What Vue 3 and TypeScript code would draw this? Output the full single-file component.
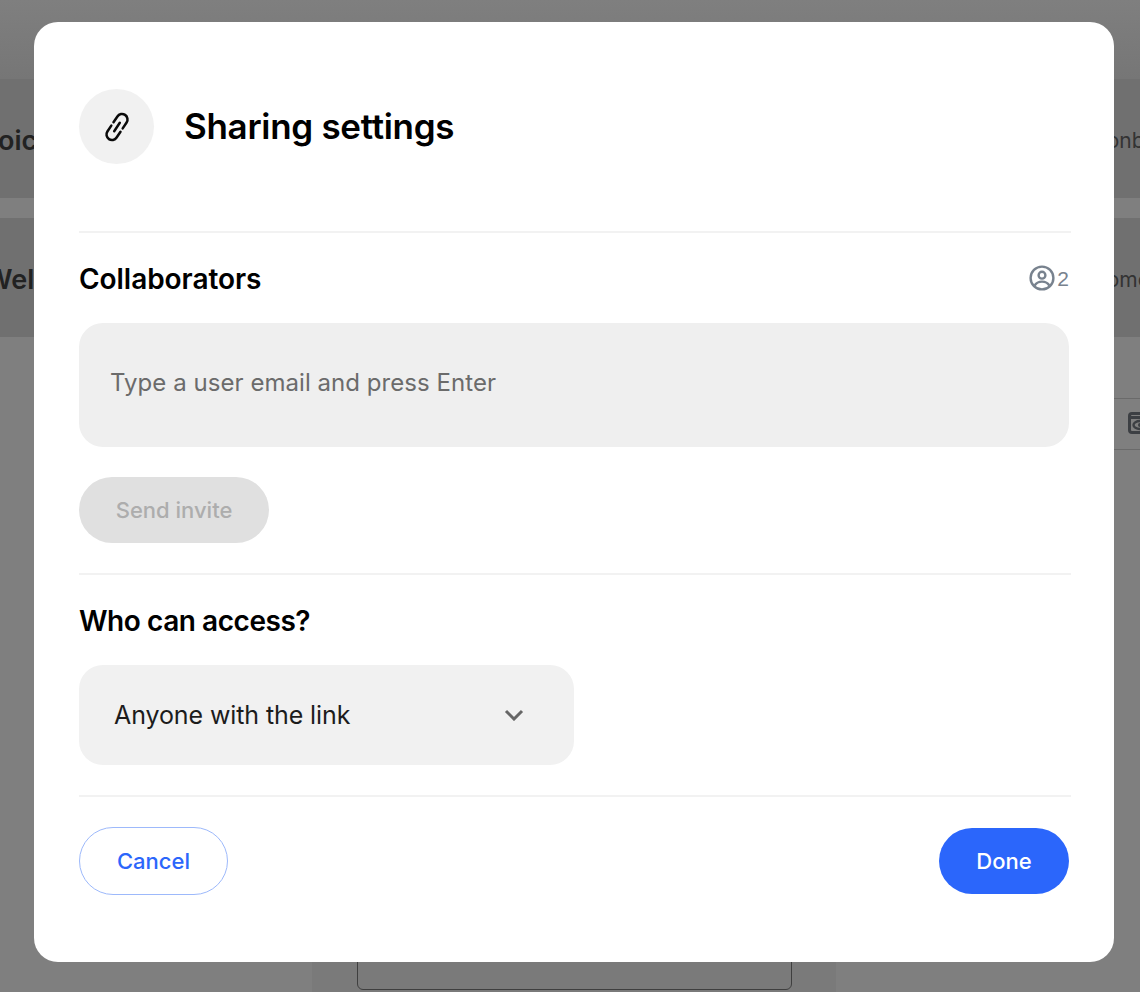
<script setup lang="ts">
  import {ref} from 'vue';

  const email = ref('');
</script>

<template>
  <div class="page">
    <div class="band first">
      <span class="band-title voice">Voice</span>
      <span class="band-side">onboarding</span>
    </div>
    <div class="band">
      <span class="band-title welcome">Welcome</span>
      <span class="band-side home">home</span>
    </div>
    <div class="toolbar">
      <svg class="eye" width="24" height="22" viewBox="0 0 24 22" fill="none">
        <rect x="1.5" y="1.5" width="21" height="19" rx="2.5" stroke="#3c3f43" stroke-width="3" />
        <path d="M2 5.5h20" stroke="#3c3f43" stroke-width="3" />
        <ellipse cx="12" cy="13" rx="6.5" ry="4" stroke="#3c3f43" stroke-width="2.4" />
        <circle cx="12" cy="13" r="2" fill="#3c3f43" />
      </svg>
    </div>
    <div class="bottom-strip">
      <div class="bottom-box"></div>
    </div>

    <div class="modal">
      <header class="modal-head">
        <div class="icon-circle">
          <svg width="28" height="32" viewBox="0 0 28 32" fill="none" stroke="#0a0a0a" stroke-width="2.5" stroke-linecap="round">
            <path d="M10.5 11.25 14.4 5.45A5.5 5.5 0 0 1 23.6 11.55L19.7 17.35" />
            <path d="M17.5 20.75 13.6 26.55A5.5 5.5 0 0 1 4.4 20.45L8.3 14.65" />
            <path d="M16.8 11.8 11.2 20.2" />
          </svg>
        </div>
        <h1>Sharing settings</h1>
      </header>

      <hr class="rule" />

      <section class="collab">
        <div class="row-between">
          <h2>Collaborators</h2>
          <div class="count">
            <svg width="26" height="26" viewBox="0 0 26 26" fill="none" stroke="#78828e" stroke-width="2.4">
              <circle cx="13" cy="13" r="11.4" />
              <circle cx="13" cy="10.2" r="3.4" />
              <path d="M5.6 20.6c1.6-2.8 4.4-4 7.4-4s5.8 1.2 7.4 4" />
            </svg>
            <span class="num">2</span>
          </div>
        </div>
        <input v-model="email" class="email" type="text" placeholder="Type a user email and press Enter" />
        <button class="btn invite" disabled>Send invite</button>
      </section>

      <hr class="rule" />

      <section class="access">
        <h2 class="who">Who can access?</h2>
        <div class="select">
          <span>Anyone with the link</span>
          <svg width="20" height="12" viewBox="0 0 20 12" fill="none" stroke="#666" stroke-width="3">
            <path d="M2 2l8 8 8-8" />
          </svg>
        </div>
      </section>

      <hr class="rule" />

      <footer class="actions">
        <button class="btn cancel">Cancel</button>
        <button class="btn done">Done</button>
      </footer>
    </div>
  </div>
</template>

<style>
  body {
    background: #7f7f7f;
  }
</style>

<style scoped>
  .page {
    position: relative;
    width: 1140px;
    height: 992px;
    overflow: hidden;
    background: linear-gradient(#7f7f7f, #767676 79px, #7f7f7f 79px);
    font-family: Inter, "Liberation Sans", sans-serif;
    padding-top: 79px;
    box-sizing: border-box;
  }

  .band {
    height: 119px;
    margin-bottom: 20px;
    padding-top: 4px;
    box-sizing: border-box;
    background: #707070;
    display: flex;
    align-items: center;
    justify-content: space-between;
    font-size: 21px;
    white-space: nowrap;
  }

  .band-title {
    font-weight: 600;
    font-size: 27px;
    color: #222;
  }

  .voice {
    margin-left: -20px;
  }

  .welcome {
    margin-left: -15px;
  }

  .band-side {
    color: #333;
    margin-right: -80px;
  }

  .home {
    margin-right: -10px;
  }

  .toolbar {
    margin-top: 61px;
    height: 52px;
    margin-left: 1114px;
    border-top: 1px solid #6a6a6a;
    border-bottom: 1px solid #6a6a6a;
    display: flex;
    align-items: center;
    padding: 0 0 3px 14px;
    box-sizing: border-box;
    overflow: hidden;
  }

  .eye {
    flex: none;
  }

  .bottom-strip {
    position: absolute;
    left: 312px;
    top: 950px;
    width: 524px;
    height: 42px;
    background: #7a7a7a;
  }

  .bottom-box {
    position: absolute;
    left: 45px;
    top: 0;
    width: 435px;
    height: 40px;
    border: 1px solid #3f3f3f;
    border-radius: 6px;
    box-sizing: border-box;
  }

  .modal {
    position: absolute;
    left: 34px;
    top: 22px;
    width: 1080px;
    height: 940px;
    padding: 67px 43px 0 45px;
    box-sizing: border-box;
    background: #fff;
    border-radius: 24px;
  }

  .modal-head {
    display: flex;
    align-items: center;
    gap: 30px;
    height: 75px;
    margin-bottom: 67px;
  }

  .icon-circle {
    width: 75px;
    height: 75px;
    border-radius: 50%;
    background: #f1f1f1;
    display: flex;
    align-items: center;
    justify-content: center;
  }

  h1 {
    margin: 0 0 2px;
    font-size: 35px;
    font-weight: 600;
    letter-spacing: -0.3px;
    color: #000;
  }

  h2 {
    margin: 0;
    padding-top: 1px;
    height: 33px;
    font-size: 28px;
    font-weight: 600;
    letter-spacing: -0.05px;
    color: #000;
    line-height: 34px;
  }

  .who {
    letter-spacing: -0.45px;
  }

  .rule {
    margin: 0;
    border: 0;
    height: 2px;
    background: #f2f2f2;
  }

  .collab {
    padding-top: 28px;
    height: 340px;
    box-sizing: border-box;
  }

  .row-between {
    display: flex;
    justify-content: space-between;
    align-items: center;
    padding-right: 2px;
  }

  .count {
    display: flex;
    align-items: center;
    gap: 2px;
    color: #78828e;
    font-size: 21px;
    font-family: "Liberation Sans", sans-serif;
  }

  .num {
    padding-top: 2px;
  }

  .email {
    display: block;
    width: 990px;
    height: 124px;
    margin-top: 28px;
    padding: 0 31px 6px;
    box-sizing: border-box;
    border: 0;
    border-radius: 24px;
    background: #efefef;
    font: 24px Inter, sans-serif;
    letter-spacing: 0.05px;
    outline: none;
  }

  .email::placeholder {
    color: #6b6b6b;
    opacity: 1;
  }

  .btn {
    border: 0;
    border-radius: 33px;
    height: 66px;
    font: 500 22px Inter, sans-serif;
    box-sizing: border-box;
    padding: 0;
  }

  .invite {
    display: block;
    width: 190px;
    margin-top: 30px;
    background: #e0e0e0;
    color: #adadad;
  }

  .access {
    padding-top: 28px;
    height: 220px;
    box-sizing: border-box;
  }

  .select {
    width: 495px;
    height: 100px;
    margin-top: 28px;
    border-radius: 24px;
    background: #f1f1f1;
    display: flex;
    align-items: center;
    justify-content: space-between;
    padding: 0 50px 0 35px;
    box-sizing: border-box;
    font-size: 25px;
    letter-spacing: -0.1px;
    color: #1c1c1c;
  }

  .actions {
    display: flex;
    justify-content: space-between;
    width: 990px;
    padding-top: 30px;
  }

  .cancel {
    width: 149px;
    height: 68px;
    background: #fff;
    color: #2b66fb;
    border: 1px solid #9db9fb;
    border-radius: 34px;
  }

  .done {
    width: 130px;
    margin-top: 1px;
    background: #2b66fb;
    color: #fff;
  }
</style>
